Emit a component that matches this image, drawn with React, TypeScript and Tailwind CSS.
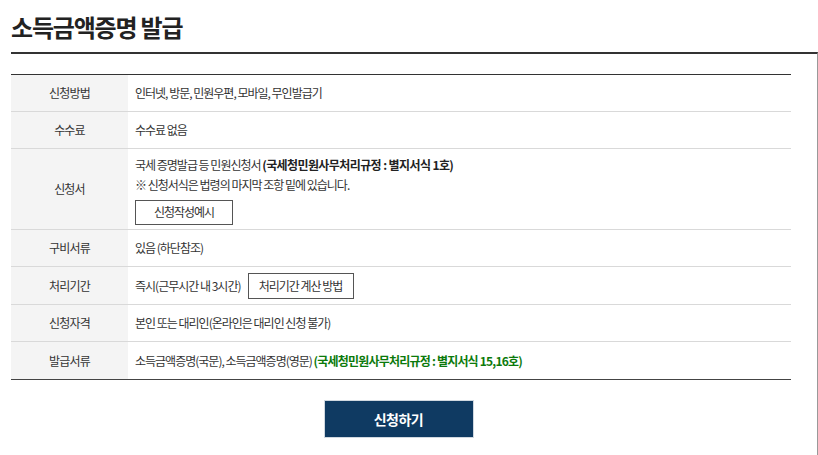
import React from "react";

const font = { fontFamily: '"Noto Sans CJK KR", "Noto Sans", sans-serif' };

function Row({ label, children, h = "h-[37px]", last = false }: { label: string; children: React.ReactNode; h?: string; last?: boolean }) {
  return (
    <div className={`flex ${h} ${last ? "" : "border-b border-[#d9d9d9]"}`}>
      <div className="w-[117px] shrink-0 bg-[#f4f4f4] flex items-center justify-center text-[12px] text-[#333] tracking-[-0.8px]">
        {label}
      </div>
      <div className="flex-1 pl-[7px] flex items-center text-[12px] text-[#333] tracking-[-1px]">{children}</div>
    </div>
  );
}

export default function App() {
  return (
    <div className="w-[818px] h-[455px] bg-white overflow-hidden" style={font}>
      <h1 className="h-[52px] pl-[11px] pt-[10px] text-[24px] leading-[34px] font-bold text-[#222] tracking-[-1.2px]">
        소득금액증명 발급
      </h1>
      <div className="ml-[11px] h-[403px] border-t-2 border-[#333] border-r border-r-[#999] pt-5">
        <div className="w-[780px] border-t border-[#333] border-b border-b-[#444]">
          <Row label="신청방법">인터넷, 방문, 민원우편, 모바일, 무인발급기</Row>
          <Row label="수수료">수수료 없음</Row>
          <Row label="신청서" h="h-[81px]">
            <div className="flex flex-col items-start pt-[1px]">
              <div className="leading-[20px]">
                국세 증명발급 등 민원신청서 <b className="font-bold text-[#222] tracking-[-0.6px]">(국세청민원사무처리규정 : 별지서식 1호)</b>
              </div>
              <div className="leading-[20px]">※ 신청서식은 법령의 마지막 조항 밑에 있습니다.</div>
              <button className="mt-[5px] w-[98px] h-[25px] border border-[#555] bg-white text-[12px] text-[#333] tracking-[-1px]">
                신청작성예시
              </button>
            </div>
          </Row>
          <Row label="구비서류">있음 (하단참조)</Row>
          <Row label="처리기간" h="h-[38px]">
            <span>즉시(근무시간 내 3시간)</span>
            <button className="ml-[7px] mt-[1px] w-[106px] h-[26px] border border-[#555] bg-white text-[12px] text-[#333] tracking-[-1px]">
              처리기간 계산 방법
            </button>
          </Row>
          <Row label="신청자격">본인 또는 대리인(온라인은 대리인 신청 불가)</Row>
          <Row label="발급서류" h="h-[37px]" last>
            소득금액증명(국문), 소득금액증명(영문)&nbsp;
            <b className="font-bold text-[#0b7a0b] tracking-[-0.8px]">(국세청민원사무처리규정 : 별지서식 15,16호)</b>
          </Row>
        </div>
        <div className="w-[780px] flex justify-center pt-[20px]">
          <button className="ml-[-5px] w-[150px] h-[38px] bg-[#0f3a62] border border-[#d0d8e0] text-white text-[14px] font-bold tracking-[-0.5px]">
            신청하기
          </button>
        </div>
      </div>
    </div>
  );
}
